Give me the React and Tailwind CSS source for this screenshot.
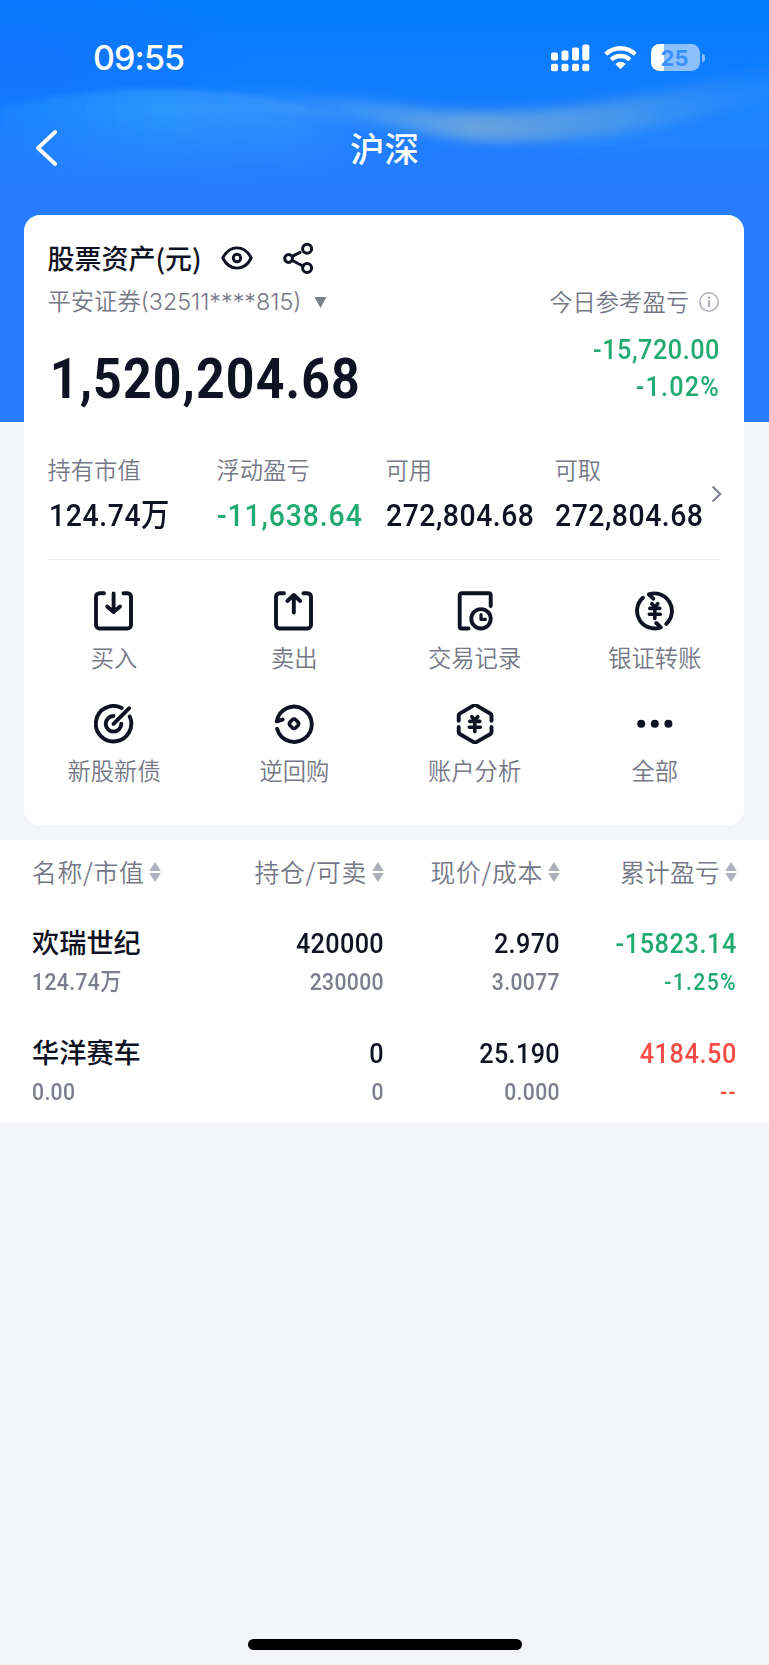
import React from 'react';

const metrics = [
  { label: '持有市值', value: '124.74万', style: 'pl-[1px] tracking-[0.7px] text-[#0f1222]' },
  { label: '浮动盈亏', value: '-11,638.64', style: 'tracking-[1px] text-[#22ab70]' },
  { label: '可用', value: '272,804.68', style: 'tracking-[0.6px] text-[#0f1222]' },
  { label: '可取', value: '272,804.68', style: 'tracking-[0.6px] text-[#0f1222]' },
];

const holdings = [
  {
    name: '欢瑞世纪',
    marketValue: '124.74万',
    amount: '420000',
    sellable: '230000',
    price: '2.970',
    cost: '3.0077',
    profit: '-15823.14',
    rate: '-1.25%',
    color: 'text-[#22ab70]',
  },
  {
    name: '华洋赛车',
    marketValue: '0.00',
    amount: '0',
    sellable: '0',
    price: '25.190',
    cost: '0.000',
    profit: '4184.50',
    rate: '--',
    color: 'text-[#fa4b46]',
  },
];

const Yen = () => (
  <path d="M16.8 12.6l3 3.8 3-3.8M14.8 17.4h10M14.3 23.3h11M19.8 17v10.6" strokeWidth="3.6" />
);

const actions = [
  {
    label: '买入',
    icon: <path d="M10 2.2H5.5A3.5 3.5 0 0 0 2 5.7V34a3.5 3.5 0 0 0 3.5 3.5h28A3.5 3.5 0 0 0 37 34V5.7A3.5 3.5 0 0 0 33.5 2.2H29.5M19.6 2.5V20.5M13.2 15.5l6.4 5.5 6.4-5.5" />,
  },
  {
    label: '卖出',
    icon: <path d="M10 2.2H5.5A3.5 3.5 0 0 0 2 5.7V34a3.5 3.5 0 0 0 3.5 3.5h28A3.5 3.5 0 0 0 37 34V5.7A3.5 3.5 0 0 0 33.5 2.2H29.5M19.8 21.5V4M13.4 10l6.4-6 6.4 6" />,
  },
  {
    label: '交易记录',
    icon: (
      <>
        <path d="M13.5 37.5H6.7a2 2 0 0 1-2-2V4.2a2 2 0 0 1 2-2h27a2 2 0 0 1 2 2V15" />
        <circle cx="26" cy="27.8" r="9.7" />
        <path d="M26 23.6v4.8h4.4" strokeWidth="3.2" />
      </>
    ),
  },
  {
    label: '银证转账',
    icon: (
      <>
        <path d="M18.3 7.6L13.8 3.3A17.6 17.6 0 0 1 31.3 32.9" />
        <path d="M21.3 32L25.8 36.3A17.6 17.6 0 0 1 7.9 6.7" />
        <Yen />
      </>
    ),
  },
  {
    label: '新股新债',
    icon: (
      <>
        <path d="M27.7 4A17.7 17.7 0 1 0 35.7 12.5" />
        <path d="M19.5 12A7.8 7.8 0 1 0 27.3 19.8M19.5 19.8L35.2 4.2" />
      </>
    ),
  },
  {
    label: '逆回购',
    icon: (
      <>
        <path d="M3.2 25A17.6 17.6 0 1 0 2.8 17.4L8.6 15.6" />
        <rect x="16" y="15.8" width="8" height="8" rx="2.4" transform="rotate(45 20 19.8)" strokeWidth="3.6" />
      </>
    ),
  },
  {
    label: '账户分析',
    icon: (
      <>
        <path d="M3.7 16.8V11.5Q3.7 10.3 4.7 9.7L18.7 1.4Q20 .7 21.3 1.4L35.5 9.7Q36.5 10.3 36.5 11.5V16.8M3.7 23V28.2Q3.7 29.4 4.7 30L18.7 38.1Q20 38.9 21.3 38.1L35.5 30Q36.5 29.4 36.5 28.2V23" />
        <Yen />
      </>
    ),
  },
  {
    label: '全部',
    icon: (
      <g fill="currentColor" stroke="none">
        <circle cx="6.2" cy="19.8" r="4" />
        <circle cx="19.8" cy="19.8" r="4" />
        <circle cx="33.4" cy="19.8" r="4" />
      </g>
    ),
  },
];

// Light streaks painted over the blue header
const HeaderBackground = () => (
  <svg className="absolute left-0 top-0 h-[422px] w-full" viewBox="0 0 769 422" preserveAspectRatio="none">
    <defs>
      <linearGradient id="base" x1="0" y1="0" x2="0" y2="1">
        <stop offset="0" stopColor="#047cff" />
        <stop offset="0.25" stopColor="#147dff" />
        <stop offset="0.43" stopColor="#287dff" />
        <stop offset="1" stopColor="#287dff" />
      </linearGradient>
      <radialGradient id="corner">
        <stop offset="0" stopColor="#1272ff" stopOpacity="0.8" />
        <stop offset="1" stopColor="#1272ff" stopOpacity="0" />
      </radialGradient>
      <linearGradient id="glow" x1="0" y1="0" x2="1" y2="0">
        <stop offset="0" stopColor="#1f90ff" stopOpacity="0.3" />
        <stop offset="0.4" stopColor="#2c99fb" stopOpacity="0.95" />
        <stop offset="0.7" stopColor="#3a96fb" stopOpacity="0.8" />
        <stop offset="1" stopColor="#2a80ff" stopOpacity="0" />
      </linearGradient>
      <linearGradient id="fade" x1="0" y1="0" x2="0" y2="1">
        <stop offset="0" stopColor="#fff" stopOpacity="0.7" />
        <stop offset="0.3" stopColor="#fff" />
        <stop offset="1" stopColor="#fff" stopOpacity="0" />
      </linearGradient>
      <mask id="fadeMask">
        <rect x="-20" y="80" width="820" height="100" fill="url(#fade)" />
      </mask>
      <linearGradient id="streak" gradientUnits="userSpaceOnUse" x1="200" y1="0" x2="769" y2="0">
        <stop offset="0" stopColor="#3f9dfb" stopOpacity="0" />
        <stop offset="0.25" stopColor="#4ea1f6" stopOpacity="0.55" />
        <stop offset="0.48" stopColor="#6ca5dc" stopOpacity="0.95" />
        <stop offset="0.75" stopColor="#529de8" stopOpacity="0.75" />
        <stop offset="1" stopColor="#2a90fa" stopOpacity="0.2" />
      </linearGradient>
      <filter id="blurSmall" x="-10%" y="-50%" width="120%" height="200%">
        <feGaussianBlur stdDeviation="6" />
      </filter>
      <filter id="blurTiny" x="-10%" y="-50%" width="120%" height="200%">
        <feGaussianBlur stdDeviation="2.5" />
      </filter>
    </defs>
    <rect width="769" height="422" fill="url(#base)" />
    <ellipse cx="20" cy="55" rx="230" ry="90" fill="url(#corner)" />
    <g mask="url(#fadeMask)">
      <path d="M-20 112C60 92 110 88 170 89C270 90 350 115 430 145V190H-20Z" fill="url(#glow)" filter="url(#blurTiny)" />
    </g>
    <path d="M600 128C680 108 730 92 790 70V150H560Z" fill="#1f8cff" fillOpacity="0.5" filter="url(#blurSmall)" />
    <path d="M200 88C290 90 380 102 440 111C540 118 660 98 790 60V92C690 124 600 142 510 142C430 142 360 118 200 92Z" fill="url(#streak)" filter="url(#blurSmall)" />
  </svg>
);

const StatusBar = () => (
  <div className="flex h-[115px] items-center pl-[93px] pr-[64px]">
    <span className="font-['Inter',sans-serif] text-[34px] font-[550] leading-none tracking-[-0.9px] text-white">09:55</span>
    <div className="ml-auto flex items-center gap-[14px]">
      <svg className="h-[28px] w-[39px]" viewBox="0 0 39 28" fill="#fff">
        <rect x="0" y="8.5" width="7" height="8" rx="2" />
        <rect x="10.5" y="6.5" width="7" height="10" rx="2" />
        <rect x="21" y="3.5" width="7" height="13" rx="2" />
        <rect x="31.3" y="0.5" width="7" height="16" rx="2" />
        <rect x="0" y="19.7" width="7" height="7.5" rx="2" />
        <rect x="10.5" y="19.7" width="7" height="7.5" rx="2" />
        <rect x="21" y="19.7" width="7" height="7.5" rx="2" />
        <rect x="31.3" y="19.7" width="7" height="7.5" rx="2" />
      </svg>
      <svg className="h-[25px] w-[33px]" viewBox="0 0 33 25" fill="none" stroke="#fff" strokeWidth="4.4">
        <path d="M1.8 9.2A21 21 0 0 1 31.2 9.2" />
        <path d="M7.2 14.8A13.3 13.3 0 0 1 25.8 14.8" />
        <path d="M16.5 24.3L11.3 19Q16.5 14.5 21.7 19Z" fill="#fff" stroke="none" />
      </svg>
      <div className="flex items-center gap-[2px]">
        <div className="flex h-[27px] w-[49px] items-center justify-center rounded-[8.5px] bg-[linear-gradient(90deg,#fff_12.5px,#8cc0ff_12.5px)]">
          <span className="pr-[2px] font-['Inter',sans-serif] text-[22px] font-bold leading-none text-[#3a90fb]">25</span>
        </div>
        <div className="h-[8px] w-[3px] rounded-r-full bg-[#8cc0ff]" />
      </div>
    </div>
  </div>
);

const SortIcon = () => (
  <svg className="ml-[5px] h-[20px] w-[12px] shrink-0" viewBox="0 0 12 20" fill="#adb0bd">
    <path d="M6 0L11.8 9H.2ZM6 20L11.8 11H.2Z" />
  </svg>
);

const AssetCard = () => (
  <section className="ml-[24px] mr-[25px] h-[610px] rounded-[16px] bg-white px-[23.5px] pt-[25px]">
    <div className="flex h-[34px] items-center text-[#0f1222]">
      <h2 className="w-[173.5px] whitespace-nowrap text-[27px] font-medium leading-none">股票资产(元)</h2>
      <svg className="mt-[1px] h-[24px] w-[32px]" viewBox="0 0 32 24" fill="none" stroke="currentColor" strokeWidth="2.9">
        <path d="M1.8 12C5 5.5 10 1.9 16 1.9S27 5.5 30.2 12C27 18.5 22 22.1 16 22.1S5 18.5 1.8 12Z" strokeLinejoin="round" />
        <circle cx="16" cy="12" r="3.7" />
      </svg>
      <svg className="ml-[30px] mt-[1px] h-[32px] w-[31px]" viewBox="0 0 31 32" fill="none" stroke="currentColor" strokeWidth="3" strokeLinecap="round">
        <circle cx="5.6" cy="16.5" r="3.9" />
        <circle cx="24.1" cy="6.7" r="4.5" />
        <circle cx="24.1" cy="26" r="4.5" />
        <path d="M9.3 14.3L17 10.3M9.3 18.5L20 24" />
      </svg>
    </div>

    <div className="mt-[11px] flex h-[34px] items-center text-[23.3px] font-[350] leading-none text-[#757887]">
      <span className="font-['Inter','Noto_Sans_CJK_SC',sans-serif]">平安证券(32511****815)</span>
      <svg className="ml-[12.5px] mt-[1px] h-[11px] w-[13px]" viewBox="0 0 13 11" fill="#7b7e8c">
        <path d="M.5 0H12.5L6.5 11Z" />
      </svg>
      <span className="ml-auto">今日参考盈亏</span>
      <svg className="ml-[10px] mr-[1.5px] h-[20px] w-[20px]" viewBox="0 0 20 20" fill="none" stroke="#adb0bd" strokeWidth="1.5">
        <circle cx="10" cy="10" r="9.2" />
        <path d="M10 8.3V15M10 4.6V6.8" strokeWidth="2.2" />
      </svg>
    </div>

    <div className="mt-[11px] flex justify-between pr-[1px] font-['Roboto','Noto_Sans_CJK_SC',sans-serif]">
      <div className="origin-left scale-x-90 pl-[2px] pt-[20px] text-[55.5px] font-bold leading-[60px] tracking-[1.3px] text-[#0f1222]">
        1,520,204.68
      </div>
      <div className="flex origin-right scale-x-90 flex-col pt-[1px] text-right text-[28px] font-medium leading-[37px] text-[#22ab70]">
        <span className="tracking-[0.6px]">-15,720.00</span>
        <span className="tracking-[1.3px]">-1.02%</span>
      </div>
    </div>

    <div className="mt-[45px] flex h-[105px] border-b border-[#ececf0]">
      {metrics.map((item) => (
        <div key={item.label} className="w-[169px] shrink-0">
          <div className="text-[23.3px] font-[350] leading-[28px] text-[#757887]">{item.label}</div>
          <div className={`mt-[15px] origin-left scale-x-90 whitespace-nowrap font-['Roboto','Noto_Sans_CJK_SC',sans-serif] text-[31.5px] font-medium leading-[36px] ${item.style}`}>
            {item.value}
          </div>
        </div>
      ))}
      <svg className="-ml-[13px] mt-[30px] h-[18px] w-[11px] shrink-0" viewBox="0 0 11 18" fill="none" stroke="#7b7e8c" strokeWidth="2">
        <path d="M1.5 1.5L9.3 9L1.5 16.5" />
      </svg>
    </div>

    <div className="-ml-[23.5px] -mr-[24.5px] mt-[31px] grid grid-cols-4 gap-y-[32px]">
      {actions.map((action) => (
        <button key={action.label} type="button" className="flex flex-col items-center">
          <svg className="h-[40px] w-[40px] text-[#0f1222]" viewBox="0 0 40 40" fill="none" stroke="currentColor" strokeWidth="3.9" strokeLinecap="round" strokeLinejoin="round">
            {action.icon}
          </svg>
          <span className="mt-[12px] text-[23.3px] font-[350] leading-[29px] text-[#757887]">{action.label}</span>
        </button>
      ))}
    </div>
  </section>
);

const HoldingsTable = () => (
  <section className="mt-[15px] h-[282px] bg-white px-[32px]">
    <div className="grid h-[64px] grid-cols-[176px_176px_176px_177px] items-center text-[24.8px] font-[350] tracking-[0.7px] text-[#757887]">
      <div className="flex items-center">名称/市值<SortIcon /></div>
      <div className="flex items-center justify-end">持仓/可卖<SortIcon /></div>
      <div className="flex items-center justify-end">现价/成本<SortIcon /></div>
      <div className="flex items-center justify-end tracking-[0.2px]">累计盈亏<SortIcon /></div>
    </div>
    {holdings.map((row) => (
      <div key={row.name} className="grid h-[109.5px] grid-cols-[176px_176px_176px_177px] pt-[21px] text-right font-['Roboto','Noto_Sans_CJK_SC',sans-serif] text-[28px] font-medium leading-[38px] tracking-[0.4px] text-[#0f1222]">
        <div className="text-left">
          <div className="text-[27.2px] tracking-normal">{row.name}</div>
          <div className="origin-left scale-x-90 text-[23.5px] text-[#7b7e8c]">{row.marketValue}</div>
        </div>
        <div className="origin-right scale-x-90">
          <div>{row.amount}</div>
          <div className="text-[23.5px] text-[#7b7e8c]">{row.sellable}</div>
        </div>
        <div className="origin-right scale-x-90">
          <div>{row.price}</div>
          <div className="text-[23.5px] text-[#7b7e8c]">{row.cost}</div>
        </div>
        <div className={`origin-right scale-x-90 ${row.color}`}>
          <div className="tracking-[0.7px]">{row.profit}</div>
          <div className="text-[23.5px] tracking-[1.5px]">{row.rate}</div>
        </div>
      </div>
    ))}
  </section>
);

const App = () => {
  return (
    <div className="relative flex h-[1665px] w-[769px] flex-col overflow-hidden bg-[#f3f5f9] font-['Noto_Sans_CJK_SC',sans-serif]">
      <HeaderBackground />
      <div className="relative flex flex-1 flex-col">
        <StatusBar />
        <header className="grid h-[100px] grid-cols-3 items-center pb-[34px]">
          <svg className="ml-[34px] h-[38px] w-[25px]" viewBox="0 0 25 38" fill="none" stroke="#fff" strokeWidth="3.8" strokeLinecap="round" strokeLinejoin="round">
            <path d="M21.2 3L4 19L21.2 35" />
          </svg>
          <h1 className="pb-[2px] text-center text-[34.5px] font-medium leading-none text-white">沪深</h1>
        </header>
        <AssetCard />
        <HoldingsTable />
        <div className="mx-auto mb-[15px] mt-auto h-[11px] w-[274px] rounded-full bg-black" />
      </div>
    </div>
  );
};

export default App;
